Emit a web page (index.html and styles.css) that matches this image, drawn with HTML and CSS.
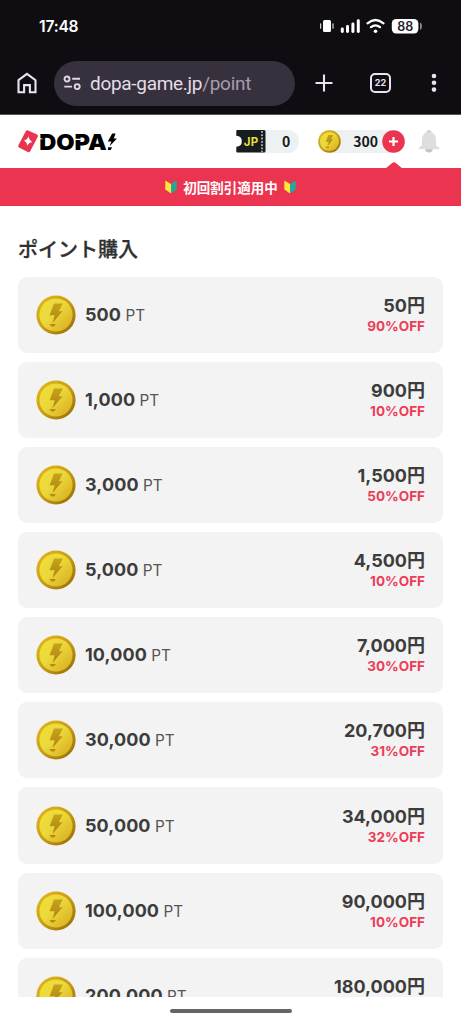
FILE: index.html
```html
<!DOCTYPE html>
<html lang="ja">
<head>
<meta charset="utf-8">
<meta name="viewport" content="width=device-width, initial-scale=1">
<title>ポイント購入</title>
<link rel="stylesheet" href="styles.css">
</head>
<body>
<svg class="defs" width="0" height="0" aria-hidden="true">
  <defs>
    <linearGradient id="rim" x1="0" y1="0" x2="1" y2="1"><stop offset="0" stop-color="#e6b91e"/><stop offset=".5" stop-color="#c99c14"/><stop offset="1" stop-color="#8d6607"/></linearGradient>
    <linearGradient id="face" x1="0" y1="0" x2="1" y2="1"><stop offset="0" stop-color="#f0df38"/><stop offset=".45" stop-color="#ebd83b"/><stop offset="1" stop-color="#d7a81d"/></linearGradient>
    <linearGradient id="mark" x1="0" y1="0" x2="0" y2="1"><stop offset="0" stop-color="#c9a21b"/><stop offset="1" stop-color="#ae8411"/></linearGradient>
  </defs>
  <symbol id="coin" viewBox="0 0 40 40">
    <circle cx="20" cy="20" r="19.6" fill="url(#rim)"/>
    <circle cx="20" cy="20" r="16.6" fill="url(#face)"/>
    <path d="M18 8.5H26.8L22.8 16.2H26.6L16.5 28L18.8 20.3H13.6Z" fill="url(#mark)"/>
    <path d="M13.6 29H19.8Q19 31.8 16.7 31.8T13.6 29Z" fill="#b58c13"/>
  </symbol>
  <symbol id="leaf" viewBox="0 0 12 14">
    <path d="M.3.6L6 4V13.5L.3 9.5Z" fill="#ffe43a"/>
    <path d="M11.7.6L6 4V13.5L11.7 9.5Z" fill="#23a99a"/>
  </symbol>
</svg>

<div class="phone">
  <div class="status">
    <span class="clock">17:48</span>
    <svg class="status-icons" width="104" height="18" viewBox="0 0 104 18">
      <g fill="#fff">
        <rect x="4" y="3" width="8" height="12" rx="1.5"/>
        <rect x="1.2" y="6.2" width="1" height="5.6" rx=".5"/><rect x="13.5" y="6.2" width="1" height="5.6" rx=".5"/>
        <rect x="21.8" y="10.5" width="3" height="5.5" rx="1.4"/><rect x="27" y="8" width="3" height="8" rx="1.4"/>
        <rect x="32.4" y="5.5" width="3" height="10.5" rx="1.4"/><rect x="37.8" y="2.3" width="3" height="13.7" rx="1.4"/>
        <circle cx="56.5" cy="14.2" r="1.8"/>
        <rect x="72.8" y="1.9" width="26.6" height="14.6" rx="4.5"/>
        <path d="M101 5.5V12.8Q102.9 12.5 102.9 9.2T101 5.5Z" opacity=".5"/>
      </g>
      <g fill="none" stroke="#fff" stroke-width="2.2" stroke-linecap="round"><path d="M48.5 6.3Q56.5-.3 64.5 6.3M52 10.2Q56.5 6.5 61 10.2"/></g>
      <text class="battery" x="86.2" y="13.9" text-anchor="middle">88</text>
    </svg>
  </div>

  <div class="browser">
    <svg class="home" width="20" height="22" viewBox="0 0 20 22"><path d="M1.5 8.2L10 1.8L18.5 8.2V20.2H12.9V13.1H7.1V20.2H1.5Z" fill="none" stroke="#ebe3ef" stroke-width="2.1"/></svg>
    <div class="address">
      <svg width="19" height="16" viewBox="0 0 19 16"><g fill="none" stroke="#dfd7e4" stroke-width="1.9"><circle cx="4" cy="4" r="2.5"/><path d="M9.2 3.8H17M1.3 11.6H9"/><circle cx="14.2" cy="11.6" r="2.5"/></g></svg>
      <span class="url">dopa-game.jp<span class="path">/point</span></span>
    </div>
    <svg class="plus" width="18" height="18" viewBox="0 0 18 18"><path d="M9 .5V17.5M.5 9H17.5" stroke="#ebe3ef" stroke-width="2.1"/></svg>
    <span class="tabs">22</span>
    <svg class="more" width="6" height="20" viewBox="0 0 6 20"><g fill="#ebe3ef"><circle cx="3" cy="3" r="2.3"/><circle cx="3" cy="9.8" r="2.3"/><circle cx="3" cy="16.6" r="2.3"/></g></svg>
  </div>

  <header class="site">
    <svg class="logo" width="100" height="24" viewBox="0 0 100 24">
      <path d="M8 .8Q9 0 10.2.5L19 4.5Q20.5 5.3 19.8 6.8L12.2 21.3Q11.3 22.8 9.8 22L1 17.5Q-.4 16.7.4 15.3Z" fill="#ea344f"/>
      <path d="M10.4 6.2Q10.6 9.5 14.2 12.2Q11 12.4 9.3 15.8Q9 12.3 6 10.5Q9.1 9.9 10.4 6.2Z" fill="#fff"/>
      <text class="wordmark" x="21.2" y="20" textLength="67.5" lengthAdjust="spacingAndGlyphs">DOPA</text>
      <path d="M20 7.4L26 9.2H20ZM57 8.8H62.5V10H57Z" fill="#fff"/>
      <path d="M94.2 3.5H97.6L95.8 8.6H99L91.6 16.2L93.4 11.4H89.8ZM90 17.2H94L92.8 20H90Z" fill="#000"/>
    </svg>
    <div class="tickets">
      <svg width="30" height="23" viewBox="0 0 30 23">
        <path d="M.3 1Q.3 0 1.3 0H28Q29.5 0 29.5 1.5V21Q29.5 22.5 28 22.5H1.3Q.3 22.5.3 21.5V16.7Q5.8 16.7 5.8 11.3T.3 5.8Z" fill="#171c1e"/>
        <path d="M26 1V22" stroke="#fff" stroke-width="1.2" stroke-dasharray="1.8 1.5"/>
        <text class="jp" x="15.2" y="15.8" text-anchor="middle">JP</text>
      </svg>
      <span>0</span>
    </div>
    <div class="points">
      <svg class="small-coin" width="23" height="23"><use href="#coin"/></svg>
      <span>300</span>
      <svg class="add" width="23" height="23" viewBox="0 0 23 23"><circle cx="11.5" cy="11.5" r="11.3" fill="#eb344f"/><path d="M11.5 7V16M7 11.5H16" stroke="#fff" stroke-width="2.2"/></svg>
    </div>
    <svg class="bell" width="22" height="23" viewBox="0 0 22 23"><path d="M8.5 2.7Q8.5.3 11 .3T13.5 2.7ZM7 19H14.8Q14.3 22.5 11 22.5T7 19Z" fill="#c4c4c4"/><path d="M11 1.5Q18 2.3 18 10V14.5Q18.2 16.2 20 16.7Q21.6 17.4 21.3 19.2H.7Q.4 17.4 2 16.7Q3.8 16.2 4 14.5V10Q4 2.3 11 1.5Z" fill="#dedede"/></svg>
  </header>

  <div class="banner">
    <svg class="caret" width="18" height="7" viewBox="0 0 18 7"><path d="M0 7L7.5.8Q9-.4 10.5.8L18 7Z" fill="#eb344f"/></svg>
    <svg width="12" height="14"><use href="#leaf"/></svg><span>初回割引適用中</span><svg width="12" height="14"><use href="#leaf"/></svg>
  </div>

  <main>
    <h1>ポイント購入</h1>
    <ul class="plans">
      <li><svg class="coin"><use href="#coin"/></svg><div class="amount"><b>500</b> PT</div><div class="price"><b>50円</b><span>90%OFF</span></div></li>
      <li><svg class="coin"><use href="#coin"/></svg><div class="amount"><b>1,000</b> PT</div><div class="price"><b>900円</b><span>10%OFF</span></div></li>
      <li><svg class="coin"><use href="#coin"/></svg><div class="amount"><b>3,000</b> PT</div><div class="price"><b>1,500円</b><span>50%OFF</span></div></li>
      <li><svg class="coin"><use href="#coin"/></svg><div class="amount"><b>5,000</b> PT</div><div class="price"><b>4,500円</b><span>10%OFF</span></div></li>
      <li><svg class="coin"><use href="#coin"/></svg><div class="amount"><b>10,000</b> PT</div><div class="price"><b>7,000円</b><span>30%OFF</span></div></li>
      <li><svg class="coin"><use href="#coin"/></svg><div class="amount"><b>30,000</b> PT</div><div class="price"><b>20,700円</b><span>31%OFF</span></div></li>
      <li><svg class="coin"><use href="#coin"/></svg><div class="amount"><b>50,000</b> PT</div><div class="price"><b>34,000円</b><span>32%OFF</span></div></li>
      <li><svg class="coin"><use href="#coin"/></svg><div class="amount"><b>100,000</b> PT</div><div class="price"><b>90,000円</b><span>10%OFF</span></div></li>
      <li><svg class="coin"><use href="#coin"/></svg><div class="amount"><b>200,000</b> PT</div><div class="price"><b>180,000円</b></div></li>
    </ul>
  </main>
  <footer class="gesture"><i></i></footer>
</div>
</body>
</html>
```

FILE: styles.css
```css
* { box-sizing: border-box; }
body { margin: 0; background: #fff; font-family: Inter, "Noto Sans CJK JP", sans-serif; color: #3a3a3a; }
svg { display: block; flex: none; }
.defs { position: absolute; }
.phone { width: 461px; height: 1024px; display: flex; flex-direction: column; overflow: hidden; }

.status { height: 52px; flex: none; background: #0f0d12; display: flex; align-items: center; justify-content: space-between; padding: 0 38px 0 39px; }
.clock { padding-top: 1px; color: #fff; font: 600 15.6px/20px Inter, sans-serif; letter-spacing: -.2px; }
.battery { font: 600 12.5px Inter, sans-serif; fill: #25232a; }

.browser { height: 63px; flex: none; background: #0f0d12; border-bottom: 1px solid #55525a; display: flex; align-items: center; padding: 0 24px 0 17px; }
.address { width: 241px; height: 45px; margin-left: 17px; border-radius: 23px; background: #37313d; display: flex; align-items: center; padding-left: 9px; gap: 8px; }
.url { padding-top: 1px; font: 400 19px/24px Roboto, sans-serif; letter-spacing: -.3px; color: #e4dde8; white-space: nowrap; }
.path { color: #a59dab; }
.plus { margin-left: 20px; }
.tabs { width: 21px; height: 20px; margin-left: 37px; border: 2px solid #ebe3ef; border-radius: 5px; color: #ebe3ef; font: 700 9px/16px Inter, sans-serif; text-align: center; }
.more { margin-left: auto; }

.site { height: 53px; flex: none; display: flex; align-items: center; padding: 0 21.5px 0 18px; }
.logo { overflow: visible; }
.wordmark { font: 900 22px Inter, sans-serif; fill: #000; }
.tickets { width: 63px; height: 23px; margin-left: 118px; border-radius: 0 12px 12px 0; background: linear-gradient(90deg, transparent 20px, #edf1f2 20px); display: flex; align-items: center; color: #17191a; font: 700 14px/20px "Noto Sans CJK JP", sans-serif; }
.tickets span { margin: -2px 0 0 16px; }
.jp { font: 700 11.5px Inter, sans-serif; fill: #e8df38; letter-spacing: .3px; }
.points { width: 87px; height: 23px; margin-left: 19.2px; border-radius: 12px; background: #edf1f2; display: flex; align-items: center; justify-content: space-between; color: #17191a; font: 700 14px/20px "Noto Sans CJK JP", sans-serif; }
.points span { margin: -2px 0 0 8px; }
.bell { margin-left: auto; }

.banner { position: relative; height: 38px; flex: none; background: #eb344f; color: #fff; display: flex; align-items: center; justify-content: center; gap: 6px; font: 700 13.5px/20px "Noto Sans CJK JP", sans-serif; }
.caret { position: absolute; left: 385px; top: -6px; }

main { flex: 1; min-height: 0; overflow: hidden; padding: 28px 18px 0; }
h1 { margin: 0; height: 42.6px; font: 500 20px/30px "Noto Sans CJK JP", sans-serif; color: #303030; -webkit-text-stroke: .3px #303030; }
.plans { list-style: none; margin: 0; padding: 0; display: flex; flex-direction: column; gap: 9px; }
.plans li { height: 76.15px; flex: none; border-radius: 9px; background: #f3f3f3; display: flex; align-items: center; padding: 0 18px; }
.coin { width: 40px; height: 40px; }
.amount { margin-left: 9px; padding-top: 1px; font-size: 15.3px; line-height: 24px; color: #555; }
.amount b { font-size: 18px; font-weight: 650; color: #3c3c3c; letter-spacing: .1px; }
.price { margin-left: auto; height: 44px; display: flex; flex-direction: column; text-align: right; }
.price b { font-size: 18px; line-height: 25px; font-weight: 650; color: #3c3c3c; }
.price span { font-size: 13.5px; line-height: 16px; font-weight: 650; color: #eb3d58; }

.gesture { height: 27px; flex: none; display: flex; justify-content: center; padding: 12px 0 0; }
.gesture i { width: 122px; height: 4px; border-radius: 2px; background: #656565; }
```
